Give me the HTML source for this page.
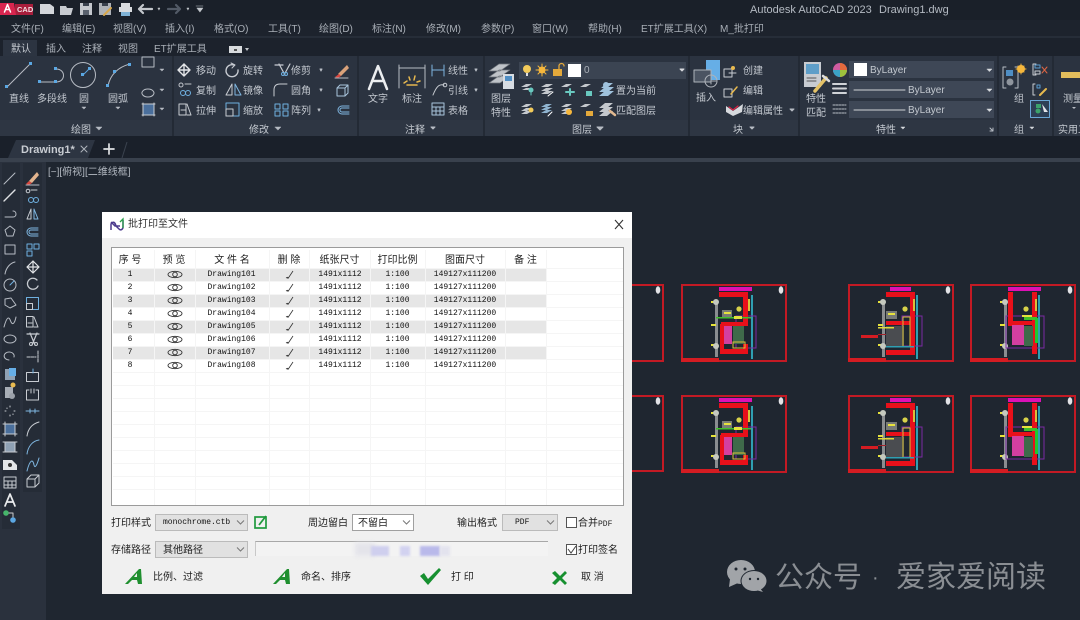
<!DOCTYPE html>
<html lang="zh"><head><meta charset="utf-8"><title>AutoCAD 批打印至文件</title>
<style>
*{box-sizing:border-box}
html,body{margin:0;padding:0;width:1080px;height:620px;overflow:hidden;background:#1f2630}
#r{position:absolute;left:0;top:0;width:1080px;height:620px;overflow:hidden;filter:blur(.35px);font-family:"Liberation Sans","Noto Sans CJK SC",sans-serif}
.b{position:absolute}
.t{position:absolute;white-space:nowrap;font-size:10px;line-height:14px;color:#c3c8cf;margin-top:2px}
.m{color:#a9afb7}
.d{color:#222;font-size:10px;line-height:14px}
.c{font-family:"Liberation Mono","Noto Serif CJK SC",monospace;font-size:8px;line-height:13px;color:#111;text-align:center;position:absolute;white-space:nowrap}
.h{position:absolute;white-space:nowrap;text-align:center;font-size:10px;line-height:14px;color:#222;top:254px}
svg{position:absolute;left:0;top:0;overflow:visible}
</style></head><body><div id="r">
<!-- chrome -->
<div class="b" style="left:0;top:0;width:1080px;height:20px;background:#1a2029"></div>
<div class="b" style="left:0;top:20px;width:1080px;height:16px;background:#1d232d"></div>
<div class="b" style="left:0;top:36px;width:1080px;height:2px;background:#262d38"></div>
<div class="b" style="left:0;top:38px;width:1080px;height:18px;background:#1c222c"></div>
<div class="b" style="left:3px;top:40px;width:34px;height:16px;background:#2c3441"></div>
<div class="b" style="left:0;top:56px;width:1080px;height:80px;background:#2b3340"></div>
<div class="b" style="left:0;top:136px;width:1080px;height:22px;background:#1a202a"></div>
<div class="b" style="left:0;top:158px;width:1080px;height:4px;background:#39414d"></div>
<div class="b" style="left:0;top:162px;width:46px;height:458px;background:#2a313d"></div>
<div class="b" style="left:2px;top:163px;width:18px;height:366px;background:#252c37"></div>
<div class="b" style="left:23px;top:163px;width:19px;height:329px;background:#252c37"></div>
<div class="b" style="left:46px;top:162px;width:1034px;height:458px;background:#1f2630"></div>
<!-- panel title strip -->
<div class="b" style="left:0;top:120px;width:1080px;height:16px;background:#2e3643"></div>
<!-- panel separators -->
<div class="b" style="left:172px;top:56px;width:2px;height:80px;background:#232a35"></div>
<div class="b" style="left:357px;top:56px;width:2px;height:80px;background:#232a35"></div>
<div class="b" style="left:483px;top:56px;width:2px;height:80px;background:#232a35"></div>
<div class="b" style="left:688px;top:56px;width:2px;height:80px;background:#232a35"></div>
<div class="b" style="left:798px;top:56px;width:2px;height:80px;background:#232a35"></div>
<div class="b" style="left:997px;top:56px;width:2px;height:80px;background:#232a35"></div>
<div class="b" style="left:1052px;top:56px;width:2px;height:80px;background:#232a35"></div>
<!-- title -->
<span class="t" style="left:750px;top:1px;font-size:11px;color:#b4bac2">Autodesk AutoCAD 2023</span>
<span class="t" style="left:879px;top:1px;font-size:11px;color:#b4bac2">Drawing1.dwg</span>
<div class="b" style="left:15px;top:4px;width:18px;height:11px;background:#a81e3c"></div>
<span class="t" style="left:17px;top:4px;margin:0;font-size:7.500px;line-height:11px;color:#f2dfe3;font-weight:bold">CAD</span>
<!-- menu -->
<span class="t m" style="left:11px;top:21px">文件(F)</span>
<span class="t m" style="left:62px;top:21px">编辑(E)</span>
<span class="t m" style="left:113px;top:21px">视图(V)</span>
<span class="t m" style="left:165px;top:21px">插入(I)</span>
<span class="t m" style="left:214px;top:21px">格式(O)</span>
<span class="t m" style="left:268px;top:21px">工具(T)</span>
<span class="t m" style="left:319px;top:21px">绘图(D)</span>
<span class="t m" style="left:372px;top:21px">标注(N)</span>
<span class="t m" style="left:426px;top:21px">修改(M)</span>
<span class="t m" style="left:481px;top:21px">参数(P)</span>
<span class="t m" style="left:532px;top:21px">窗口(W)</span>
<span class="t m" style="left:588px;top:21px">帮助(H)</span>
<span class="t m" style="left:641px;top:21px">ET扩展工具(X)</span>
<span class="t m" style="left:720px;top:21px">M_批打印</span>
<!-- tabs -->
<span class="t" style="left:11px;top:41px">默认</span>
<span class="t m" style="left:46px;top:41px">插入</span>
<span class="t m" style="left:82px;top:41px">注释</span>
<span class="t m" style="left:118px;top:41px">视图</span>
<span class="t m" style="left:154px;top:41px">ET扩展工具</span>
<!-- draw panel -->
<span class="t" style="left:9px;top:91px">直线</span>
<span class="t" style="left:37px;top:91px">多段线</span>
<span class="t" style="left:79px;top:91px">圆</span>
<span class="t" style="left:108px;top:91px">圆弧</span>
<span class="t" style="left:71px;top:122px">绘图</span>
<span class="t" style="left:196px;top:63px">移动</span>
<span class="t" style="left:196px;top:83px">复制</span>
<span class="t" style="left:196px;top:103px">拉伸</span>
<span class="t" style="left:243px;top:63px">旋转</span>
<span class="t" style="left:243px;top:83px">镜像</span>
<span class="t" style="left:243px;top:103px">缩放</span>
<span class="t" style="left:291px;top:63px">修剪</span>
<span class="t" style="left:291px;top:83px">圆角</span>
<span class="t" style="left:291px;top:103px">阵列</span>
<span class="t" style="left:249px;top:122px">修改</span>
<span class="t" style="left:368px;top:91px">文字</span>
<span class="t" style="left:402px;top:91px">标注</span>
<span class="t" style="left:448px;top:63px">线性</span>
<span class="t" style="left:448px;top:83px">引线</span>
<span class="t" style="left:448px;top:103px">表格</span>
<span class="t" style="left:405px;top:122px">注释</span>
<span class="t" style="left:491px;top:91px">图层</span>
<span class="t" style="left:491px;top:105px">特性</span>
<span class="t" style="left:616px;top:83px">置为当前</span>
<span class="t" style="left:616px;top:103px">匹配图层</span>
<span class="t" style="left:572px;top:122px">图层</span>
<div class="b" style="left:519px;top:62px;width:167px;height:17px;background:#3b4452"></div>
<span class="t" style="left:584px;top:62px;font-size:10px;color:#aab0b8">0</span>
<span class="t" style="left:696px;top:90px">插入</span>
<span class="t" style="left:743px;top:63px">创建</span>
<span class="t" style="left:743px;top:83px">编辑</span>
<span class="t" style="left:743px;top:103px">编辑属性</span>
<span class="t" style="left:733px;top:122px">块</span>
<span class="t" style="left:806px;top:91px">特性</span>
<span class="t" style="left:806px;top:105px">匹配</span>
<div class="b" style="left:849px;top:61px;width:145px;height:17px;background:#3e4756"></div>
<div class="b" style="left:849px;top:81px;width:145px;height:17px;background:#3e4756"></div>
<div class="b" style="left:849px;top:101px;width:145px;height:17px;background:#3e4756"></div>
<div class="b" style="left:854px;top:63px;width:13px;height:13px;background:#fff"></div>
<span class="t" style="left:870px;top:62px">ByLayer</span>
<span class="t" style="left:908px;top:82px">ByLayer</span>
<span class="t" style="left:908px;top:102px">ByLayer</span>
<span class="t" style="left:876px;top:122px">特性</span>
<span class="t" style="left:1014px;top:91px">组</span>
<span class="t" style="left:1014px;top:122px">组</span>
<span class="t" style="left:1063px;top:91px">测量</span>
<span class="t" style="left:1058px;top:122px">实用工具</span>
<!-- file tab -->
<svg width="1080" height="620"><path d="M8 158L16 140H95L88 158Z" fill="#2d3542"/><path d="M122 158L127 142" stroke="#3a424e"/></svg>
<span class="t" style="left:21px;top:141px;font-size:11px;font-weight:bold;color:#c8ccd2">Drawing1*</span>
<span class="t" style="left:48px;top:164px;color:#b4bac2">[−][俯视][二维线框]</span>

<!-- chrome icons -->
<svg width="1080" height="620" fill="none" stroke-linecap="round" stroke-linejoin="round">
<!-- logo -->
<path d="M0 3H14L16 15H0Z" fill="#d8264f"/><path d="M4.500 12L7.500 4.500L10.500 12M5.500 9.500H9.500" stroke="#fff" stroke-width="1.500"/>
<!-- quick access -->
<path d="M40 4H50L54 7V14H40Z" fill="#d3d6da"/>
<path d="M60 6H66L67 8H73L71 15H60Z" fill="#c7cbd0"/>
<rect x="80" y="3" width="12" height="12" fill="#c3c7cc"/><rect x="83" y="3" width="6" height="3" fill="#39414d"/><rect x="83" y="10" width="6" height="5" fill="#5a626e"/>
<rect x="99" y="3" width="12" height="12" fill="#aeb2b7"/><rect x="102" y="3" width="6" height="3" fill="#39414d"/><path d="M104 15L111 8" stroke="#d6a74a" stroke-width="2"/>
<rect x="121" y="3" width="9" height="4" fill="#d9dcdf"/><rect x="119" y="7" width="13" height="5" fill="#d9dcdf"/><rect x="121" y="12" width="9" height="4" fill="#7fb2d5"/>
<path d="M139 9H152M143 5L139 9L143 13" stroke="#c4c8cd" stroke-width="2.200"/>
<path d="M168 9H180M176 5L180 9L176 13" stroke="#525a66" stroke-width="2.200"/>
<path d="M158 8L160 8L159 10Z M187 8L189 8L188 10Z M196 6H203 M197 8L203 8L200 12Z" fill="#c4c8cd" stroke="#c4c8cd" stroke-width=".5"/>
<!-- tab icon -->
<rect x="229" y="46" width="13" height="7" fill="#d8dbde"/><rect x="234" y="49" width="3" height="2" fill="#555"/><path d="M245 48L249 48L247 51Z" fill="#c4c8cd"/>
<!-- draw panel -->
<g stroke="#b7bcc4" stroke-width="1">
<path d="M7 87L30 64"/><path d="M39 82H56C66 82 66 69 56 69"/><circle cx="83" cy="75" r="12.500"/><path d="M108 86C110 75 118 67 130 64"/></g>
<g fill="#5ba7e2"><rect x="5" y="85" width="3" height="3"/><rect x="29" y="62" width="3" height="3"/><rect x="38" y="80" width="3" height="3"/><rect x="54" y="80" width="3" height="3"/><rect x="54" y="67" width="3" height="3"/><rect x="81" y="73" width="3" height="3"/><rect x="88" y="67" width="3" height="3"/><rect x="106" y="84" width="3" height="3"/><rect x="113" y="70" width="3" height="3"/><rect x="128" y="63" width="3" height="3"/></g>
<path d="M83 75L89 69" stroke="#5ba7e2"/>
<path d="M142 65H154V75H142Z M148 97A6 4 0 1 1 147.900 97Z" stroke="#b7bcc4" transform="translate(0 -8)"/>
<rect x="143" y="104" width="11" height="11" fill="#4a6f9c" stroke="#b7bcc4"/>
<path d="M142 104H155M142 115H155M143 103V116M154 103V116" stroke="#c8ccd2"/>
<path d="M160 69H164L162 71Z M160 89H164L162 91Z M160 108H164L162 110Z M82 107H86L84 109Z M116 107H120L118 109Z M96 127H102L99 130Z M275 127H281L278 130Z" fill="#b7bcc4" stroke="#b7bcc4" stroke-width=".5"/>
<!-- modify -->
<path d="M178 70H190M184 64V76M181 67L184 64L187 67M181 73L184 76L187 73M181 67L178 70L181 73M187 67L190 70L187 73" stroke="#e2e4e7" stroke-width="1.400"/>
<circle cx="181" cy="85" r="2" stroke="#c0c4ca"/><path d="M185 84H191" stroke="#c0c4ca"/><circle cx="183" cy="93" r="2.500" stroke="#6fb0e0"/><circle cx="188" cy="93" r="2.500" stroke="#6fb0e0"/>
<path d="M179 104H186V115H179Z M187 104L191 115H187" stroke="#c8ccd2"/><path d="M181 110H186" stroke="#c8ccd2"/>
<path d="M234 65A6 6 0 1 0 238 70" stroke="#c8ccd2" stroke-width="1.400"/><path d="M231 63L235 65L232 68" stroke="#c8ccd2"/>
<path d="M232 84L226 95H232Z" stroke="#c8ccd2"/><path d="M235 84L241 95H235Z" stroke="#7fb6e0"/>
<rect x="226" y="103" width="13" height="13" stroke="#6fb0e0"/><rect x="226" y="109" width="7" height="7" stroke="#c8ccd2"/>
<path d="M275 65H283M279 64L285 75M290 64L284 75" stroke="#c8ccd2" stroke-width="1.200"/><circle cx="283" cy="74" r="1.500" stroke="#6fb0e0"/><circle cx="286" cy="74" r="1.500" stroke="#6fb0e0"/>
<path d="M274 96V90Q274 84 280 84H287" stroke="#c8ccd2"/>
<path d="M275 104h5v5h-5ZM283 104h5v5h-5ZM275 111h5v5h-5ZM283 111h5v5h-5Z" stroke="#6fb0e0"/>
<path d="M320 69L322 69L321 71Z M320 89L322 89L321 91Z M318 109L320 109L319 111Z" fill="#b7bcc4" stroke="#b7bcc4"/>
<path d="M338 74L347 65L349 68L341 76Z" fill="#d9a27a"/><path d="M335 77L339 74L341 76L338 78Z" fill="#d9473f"/><path d="M335 78H348" stroke="#b7bcc4"/>
<path d="M337 88H345V96H337Z M337 88L340 85H348V93L345 96M345 88L348 85" stroke="#a8c4dc"/>
<path d="M349 106H342A3.500 3.500 0 0 0 342 114H349M349 108H342A1.500 1.500 0 0 0 342 112H349" stroke="#7fb6e0"/>
<!-- annotate -->
<path d="M369 89L378 66L387 89M372 81H384" stroke="#eceef0" stroke-width="2.500"/>
<path d="M399 65V88M425 65V88M399 68H425" stroke="#b7bcc4"/>
<path d="M404 83L407 81M409 77L410 80M415 76L414 80M420 81L417 82M407 85H417" stroke="#e6b84f" stroke-width="1.500"/>
<path d="M432 65V76M444 65V76M432 70H444" stroke="#7fb6e0"/>
<path d="M433 95C437 85 440 84 444 85" stroke="#c8ccd2"/><circle cx="445" cy="85" r="1.800" stroke="#c8ccd2"/>
<rect x="432" y="103" width="12" height="12" stroke="#a8c4dc"/><path d="M432 107H444M432 111H444M436 107V115M440 107V115" stroke="#a8c4dc"/>
<path d="M475 69L477 69L476 71Z M475 89L477 89L476 91Z M431 127H435L433 129Z" fill="#b7bcc4" stroke="#b7bcc4"/>
<!-- layer -->
<path d="M489 71L499 64H510L500 71Z M489 77L499 70H510L500 77Z M489 83L499 76H510L500 83Z" fill="#bfc3c8" stroke="#6f747b" stroke-width=".7"/>
<rect x="503" y="74" width="11" height="15" fill="#d7dce2"/><rect x="505" y="76" width="7" height="5" fill="#4f8ec4"/>
<circle cx="527" cy="69" r="4" fill="#f3cb5a"/><rect x="526" y="73" width="2" height="3" fill="#dfe0e2"/>
<circle cx="542" cy="70" r="3.500" fill="#f6b73c"/><path d="M542 64V76M536 70H548M538 66L546 74M546 66L538 74" stroke="#f6b73c"/>
<rect x="553" y="69" width="9" height="7" fill="#e4a93b"/><path d="M559 69V66A2.500 2.500 0 0 1 564 66" stroke="#e4a93b" stroke-width="1.300"/>
<rect x="568" y="64" width="13" height="13" fill="#fff"/>
<path d="M680 69H684L682 71Z" fill="#d7dade" stroke="#d7dade"/>
<g fill="#c4c8cd">
<path d="M521 87L526 84H532L527 87Z M522 90l4-2h6l-4 2Z"/><path d="M541 87L546 84H553L548 87Z M541 91L546 88H553L548 91Z M541 94L546 91H553L548 94Z"/>
<path d="M561 87L566 84H572L567 87Z"/><path d="M580 87L585 84H591L586 87Z"/>
<path d="M601 88L607 83H613L607 88Z M599 92L605 87H614L608 92Z M599 96L605 91H614L608 96Z" fill="#9fc2dd"/>
<path d="M521 107L526 104H532L527 107Z M521 111L526 108H532L527 111Z M521 114L526 111H532L527 114Z"/>
<path d="M541 107L546 104H552L547 107Z M541 110L546 107H552L547 110Z M541 113L546 110H552L547 113Z" fill="#8fb3cf"/>
<path d="M561 107L566 104H572L567 107Z M561 111L566 108H572L567 111Z M561 114L566 111H572L567 114Z"/>
<path d="M580 107L585 104H591L586 107Z"/>
<path d="M599 108L605 103H613L607 108Z M599 112L605 107H613L607 112Z M599 116L605 111H613L607 116Z"/></g>
<circle cx="531" cy="90" r="2.500" fill="#69c9c0"/><path d="M531 92V95" stroke="#69c9c0"/><path d="M548 96L553 92" stroke="#fff"/><path d="M566 92h8M570 89v6" stroke="#69c9c0" stroke-width="2"/><rect x="586" y="91" width="6" height="5" fill="#69c9c0"/><circle cx="531" cy="110" r="2.500" fill="#f3cb5a"/><path d="M548 116L552 112" stroke="#fff"/><circle cx="569" cy="112" r="3" fill="#f6b73c"/><rect x="586" y="111" width="7" height="5" fill="#e4a93b"/><path d="M610 111L615 115" stroke="#e0b890" stroke-width="2.500"/>
<circle cx="606" cy="85" r="3" fill="#9fc2dd"/>
<path d="M597 127H603L600 130Z" fill="#b7bcc4" stroke="#b7bcc4"/>
<!-- block -->
<path d="M706 60H720V80H706Z" fill="#66aee6" stroke="none"/><rect x="694" y="70" width="17" height="12" fill="#4b5462" stroke="#aeb3ba"/><circle cx="711" cy="81" r="6" stroke="#aeb3ba"/><path d="M711 78V84M711 81L716 81" stroke="#aeb3ba"/>
<path d="M724 69H732V77H724Z M729 73H736" stroke="#c8ccd2"/><circle cx="733" cy="68" r="2" fill="#e8ba4f"/><path d="M724 89H732V97H724Z" stroke="#c8ccd2"/><path d="M731 94L737 87" stroke="#e8ba4f" stroke-width="1.500"/>
<path d="M726 106L733 111L743 104L742 112L733 116L726 112Z" fill="#d6d9dd"/><path d="M729 107L733 110L738 106" stroke="#d24" stroke-width="1.200"/>
<path d="M790 109H794L792 111Z M750 127H754L752 129Z" fill="#b7bcc4" stroke="#b7bcc4"/>
<!-- props -->
<rect x="804" y="62" width="17" height="25" fill="#c8ccd2"/><rect x="806" y="64" width="13" height="10" fill="#5e9ec9"/><path d="M807 78h9M807 81h9" stroke="#555"/><path d="M815 91L826 78" stroke="#e4c268" stroke-width="3.500"/><path d="M823 76L829 81" stroke="#ddd" stroke-width="2.500"/>
<circle cx="840" cy="70" r="7" fill="#d05ba0"/><path d="M840 63A7 7 0 0 1 847 70H840Z" fill="#e46a3c"/><path d="M840 70H847A7 7 0 0 1 840 77Z" fill="#9dc23c"/><path d="M840 70V77A7 7 0 0 1 833 70Z" fill="#3ba3c6"/>
<path d="M833 84H846M833 88.500H846M833 93H846" stroke="#d0d3d7" stroke-width="2"/><path d="M833 105H846M833 109H846M833 113H846" stroke="#b7bcc4" stroke-dasharray="2 1"/>
<path d="M854 90H905M854 110H905" stroke="#d0d3d7"/>
<path d="M987 69H992L989.500 71.500Z M987 89H992L989.500 91.500Z M987 109H992L989.500 111.500Z M901 127H905L903 129Z M1030 127H1034L1032 129Z" fill="#d7dade" stroke="#d7dade" stroke-width=".5"/>
<path d="M990 128L993 131M993 128V131H990" stroke="#b7bcc4"/>
<!-- group -->
<path d="M1006 67H1003V88H1006M1015 67H1018V88H1015" stroke="#b7bcc4"/><rect x="1006" y="70" width="7" height="6" fill="#4f8ec4"/><circle cx="1010" cy="82" r="3.500" fill="#8f959d"/>
<circle cx="1021" cy="69" r="4" fill="#f6b73c"/><path d="M1021 64V74M1016 69H1026M1018 66L1024 72M1024 66L1018 72" stroke="#f6b73c"/>
<path d="M1036 64H1033V75H1036" stroke="#c8ccd2"/><rect x="1035" y="65" width="5" height="3" stroke="#5b9ed0"/><rect x="1035" y="71" width="5" height="3" stroke="#c8ccd2"/><path d="M1042 67L1047 73M1047 67L1042 73" stroke="#d64"/>
<path d="M1035 84H1033V95H1035" stroke="#c8ccd2"/><path d="M1040 95L1046 89" stroke="#e8ba4f" stroke-width="2"/><rect x="1037" y="85" width="3" height="3" stroke="#5b9ed0"/>
<rect x="1030.500" y="100.500" width="19" height="17" fill="#2d3f55" stroke="#6aa7d6"/><rect x="1036" y="104" width="5" height="4" fill="#3ca36b"/><circle cx="1038" cy="111" r="2.500" fill="#3ca36b"/><path d="M1042 104L1048 112L1044 112L1045 116Z" fill="#e4e6e9"/>
<rect x="1061" y="72" width="19" height="6" fill="#e2bd5c"/>
<path d="M1072 107H1076L1074 109Z" fill="#b7bcc4"/>
<!-- tab -->
<path d="M81 146L87 152M87 146L81 152" stroke="#aeb3ba"/><path d="M104 149H114M109 144V154" stroke="#dfe1e4" stroke-width="1.700"/>
<!-- left toolbar 1 -->
<g stroke="#b7bcc4">
<path d="M4 184L15 173"/><path d="M4 201L15 190" stroke="#dfe1e4" stroke-width="1.400"/><path d="M5 217H13C17 217 17 211 13 211"/><path d="M10 226L15 230L13 236H7L5 230Z"/><rect x="5" y="245" width="10" height="9"/><path d="M5 274C6 268 10 263 15 262"/><circle cx="10" cy="285" r="6"/><path d="M10 285L14 281" stroke="#6fb0e0"/><path d="M5 299L11 298L16 305L10 308L5 305Z"/><path d="M4 327C7 316 9 316 11 322C13 326 15 322 16 317"/><ellipse cx="10" cy="339" rx="6" ry="4"/><path d="M14 357A5 4 0 1 0 9 360"/></g>
<rect x="5" y="369" width="10" height="11" fill="#8fa1b4"/><rect x="9" y="368" width="7" height="8" fill="#66aee6"/><rect x="5" y="387" width="8" height="11" fill="#a7adb5"/><circle cx="13" cy="385" r="2.500" fill="#e8ba4f"/><circle cx="12" cy="396" r="3" fill="#9aa0a8"/>
<path d="M10 406v1M5 411h1M14 411h1M10 415v1M7 408v.5M13 414v.5" stroke="#c8ccd2"/>
<rect x="5" y="424" width="10" height="10" fill="#4a6f9c"/><path d="M3 424H17M3 434H17M5 422V436M15 422V436" stroke="#c8ccd2"/>
<rect x="5" y="442" width="10" height="10" fill="#8fa1b4" stroke="#c8ccd2"/><path d="M3 442H17M3 452H17" stroke="#c8ccd2"/>
<path d="M3 460H12L17 465V470H3Z" fill="#e3e5e8"/><circle cx="10" cy="465" r="2" fill="#333"/>
<rect x="4" y="477" width="12" height="11" stroke="#c8ccd2"/><path d="M4 481H16M4 485H16M8 481V488M12 481V488" stroke="#c8ccd2"/>
<path d="M5 506L10 494L15 506M7 502H13" stroke="#e8eaec" stroke-width="1.700"/>
<circle cx="6" cy="513" r="2.800" fill="#46b66b"/><circle cx="13" cy="520" r="2.800" fill="#5ba7e2"/><path d="M9 513H13V517" stroke="#ccc"/>
<!-- left toolbar 2 -->
<path d="M29 181L37 172L39 175L32 183Z" fill="#e2b48e"/><path d="M26 184L29 181L32 183L29 185Z" fill="#d9473f"/><path d="M26 185H39" stroke="#b7bcc4"/>
<circle cx="28" cy="191" r="1.800" stroke="#c8ccd2"/><path d="M31 190H37" stroke="#c8ccd2"/><circle cx="31" cy="200" r="2.500" stroke="#6fb0e0"/><circle cx="36" cy="200" r="2.500" stroke="#6fb0e0"/>
<path d="M31 209L27 219H31Z" stroke="#c8ccd2"/><path d="M34 209L38 219H34Z" stroke="#7fb6e0"/>
<path d="M38 228H31A3.500 3.500 0 0 0 31 236H38M38 230H31A1.500 1.500 0 0 0 31 234H38" stroke="#7fb6e0"/>
<path d="M27 244h5v5h-5ZM34 244h5v5h-5ZM27 251h5v5h-5Z" stroke="#6fb0e0"/>
<path d="M27 267H39M33 261V273M30 264L33 261L36 264M30 270L33 273L36 270M30 264L27 267L30 270M36 264L39 267L36 270" stroke="#e2e4e7" stroke-width="1.200"/>
<path d="M37 280A5.500 5.500 0 1 0 38 286" stroke="#c8ccd2" stroke-width="1.300"/>
<rect x="26.500" y="297.500" width="12" height="12" stroke="#6fb0e0"/><rect x="26.500" y="303.500" width="6" height="6" stroke="#c8ccd2"/>
<path d="M26.500 316.500H33V327H26.500ZM34 317L38 327H34M28 323H32" stroke="#c8ccd2"/>
<path d="M27 334L39 334M30 333L35 345M37 333L32 345" stroke="#c8ccd2" stroke-width="1.200"/><circle cx="31" cy="344" r="1.500" stroke="#c8ccd2"/><circle cx="36" cy="344" r="1.500" stroke="#c8ccd2"/>
<path d="M38 351V362M27 357H36" stroke="#c8ccd2" stroke-dasharray="3 1"/>
<rect x="26.500" y="372.500" width="12" height="9" stroke="#c8ccd2"/><path d="M33 369V373" stroke="#6fb0e0"/>
<path d="M26.500 390V400H38.500V390H36M26.500 390H29M31 389V393M34 389V393" stroke="#c8ccd2"/>
<path d="M26 411H39" stroke="#7fb6e0"/><path d="M30 409V413M35 409V413" stroke="#7fb6e0"/>
<path d="M27 436C28 429 32 424 39 422" stroke="#c8ccd2"/><path d="M27 454C28 447 32 441 39 440" stroke="#7fb6e0"/><path d="M27 471C30 459 33 459 34 465C35 469 37 465 39 458" stroke="#7fb6e0"/>
<path d="M27 479H35V487H27ZM27 479L31 475H39V483L35 487M35 479L39 475" stroke="#c8ccd2"/>
</svg>

<!-- drawing sheets -->
<svg width="1080" height="620" viewBox="0 0 1080 620">
<defs>
<g id="core">
<rect x="1" y="1" width="104" height="76" fill="none" stroke="#c31a24" stroke-width="2"/>
<rect x="0" y="74" width="38" height="4" fill="#d41c22"/>
<ellipse cx="100" cy="6" rx="2.300" ry="3.800" fill="#e2e2e6"/>
<rect x="34" y="16" width="3" height="57" fill="#8a8d90"/>
<rect x="30" y="17" width="5" height="2" fill="#e6e23c"/><rect x="30" y="40" width="5" height="2" fill="#e6e23c"/><rect x="30" y="60" width="5" height="2" fill="#e6e23c"/>
<circle cx="35" cy="18" r="3" fill="#c5c9c0"/><circle cx="35" cy="62" r="3" fill="#c5c9c0"/>
</g>
<g id="A">
<use href="#core"/>
<rect x="38" y="3" width="33" height="4" fill="#dd10b5"/>
<rect x="70" y="11" width="2" height="64" fill="#2f9fb2"/>
<rect x="55" y="32" width="20" height="32" fill="none" stroke="#7b2ba3"/>
<rect x="38" y="8" width="28" height="5" fill="#e8101a"/>
<rect x="62" y="8" width="5" height="33" fill="#e8101a"/>
<rect x="40" y="38" width="27" height="4" fill="#e8101a"/>
<rect x="39" y="40" width="4" height="30" fill="#e8101a"/>
<rect x="39" y="65" width="28" height="5" fill="#e8101a"/>
<rect x="62" y="60" width="5" height="8" fill="#e8101a"/>
<rect x="35" y="33" width="35" height="1.500" fill="#3fc02a"/>
<rect x="43" y="42" width="8" height="18" fill="#d43fa0"/>
<rect x="52" y="42" width="11" height="18" fill="#3f6a4a"/>
<rect x="52" y="58" width="12" height="6" fill="none" stroke="#d8c23a"/>
<rect x="41" y="26" width="10" height="7" fill="#7a7d74"/><rect x="43" y="28" width="7" height="2" fill="#e6e23c"/>
<circle cx="58" cy="25" r="2.600" fill="#d8d24a"/>
<rect x="53" y="32" width="8" height="3" fill="#e6e23c"/>
<rect x="67" y="15" width="2" height="12" fill="#d8c23a"/>
</g>
<g id="B">
<use href="#core"/>
<rect x="42" y="3" width="21" height="4" fill="#dd10b5"/>
<rect x="68" y="11" width="2" height="64" fill="#2f9fb2"/>
<rect x="54" y="32" width="20" height="30" fill="none" stroke="#7b2ba3"/>
<rect x="38" y="8" width="27" height="5" fill="#e8101a"/>
<rect x="62" y="8" width="5" height="63" fill="#e8101a"/>
<rect x="38" y="37" width="26" height="4" fill="#e8101a"/>
<rect x="38" y="66" width="28" height="5" fill="#e8101a"/>
<rect x="13" y="51" width="17" height="3" fill="#d41c22"/>
<rect x="30" y="50" width="14" height="1" fill="#a2222a"/>
<rect x="38" y="27" width="11" height="8" fill="#777a76"/><rect x="40" y="29" width="7" height="2" fill="#e6e23c"/>
<circle cx="57" cy="25" r="2.600" fill="#d8d24a"/>
<rect x="38" y="42" width="18" height="20" fill="#4a4c50"/>
<rect x="30" y="43" width="16" height="1.500" fill="#dfdb3c"/>
<rect x="55" y="33" width="7" height="30" fill="none" stroke="#d8c23a"/>
<rect x="65" y="15" width="2" height="12" fill="#d8c23a"/>
<rect x="38" y="62" width="28" height="1.500" fill="#2f9fb2"/>
</g>
<g id="C">
<use href="#core"/>
<rect x="38" y="3" width="33" height="4" fill="#dd10b5"/>
<rect x="68" y="11" width="2" height="64" fill="#2f9fb2"/>
<rect x="36" y="32" width="38" height="32" fill="none" stroke="#7b2ba3"/>
<rect x="38" y="8" width="5" height="34" fill="#e8101a"/>
<rect x="62" y="8" width="5" height="62" fill="#e8101a"/>
<rect x="38" y="37" width="26" height="4" fill="#e8101a"/>
<rect x="42" y="41" width="12" height="20" fill="#d43fa0"/>
<rect x="54" y="33" width="13" height="3" fill="#3fc02a"/>
<rect x="54" y="42" width="9" height="20" fill="#3f6a4a"/>
<rect x="65" y="34" width="3" height="25" fill="#20c830"/>
<circle cx="56" cy="25" r="2.600" fill="#d8d24a"/>
<rect x="52" y="31" width="10" height="2" fill="#e6e23c"/>
<rect x="65" y="15" width="2" height="12" fill="#d8c23a"/>
</g>
</defs>
<path d="M632 285H663V361H632" fill="none" stroke="#c31a24" stroke-width="2"/><ellipse cx="658" cy="290" rx="2.300" ry="3.800" fill="#e2e2e6"/>
<path d="M632 396H663V471H632" fill="none" stroke="#c31a24" stroke-width="2"/><ellipse cx="658" cy="401" rx="2.300" ry="3.800" fill="#e2e2e6"/>
<use href="#A" x="681" y="284"/><use href="#A" x="681" y="395"/>
<use href="#B" x="848" y="284"/><use href="#B" x="848" y="395"/>
<use href="#C" x="970" y="284"/><use href="#C" x="970" y="395"/>
</svg>

<!-- dialog -->
<div class="b" style="left:102px;top:212px;width:530px;height:382px;background:#f0f0f0"></div>
<div class="b" style="left:102px;top:212px;width:530px;height:26px;background:#fff"></div>
<span class="t d" style="left:128px;top:216px;color:#333">批打印至文件</span>
<div class="b" style="left:111px;top:247px;width:513px;height:259px;background:#fff;border:1px solid #9b9b9b"></div>
<svg width="1080" height="620" fill="none">
<path d="M111 222L115 226L120 226M111 230V224C113 221 115 222 116 226L119 229C121 231 123 229 123 227V220" stroke="#4b3a8c" stroke-width="1.500"/><path d="M120 222L123 219V228" stroke="#2aa04a" stroke-width="1.300"/>
<path d="M615 220L623 229M623 220L615 229" stroke="#333" stroke-width="1.100"/>
<!-- stripes -->
<g fill="#e6e6e6"><rect x="113" y="268" width="433" height="13"/><rect x="113" y="294" width="433" height="13"/><rect x="113" y="320" width="433" height="13"/><rect x="113" y="346" width="433" height="13"/></g>
<!-- grid -->
<g stroke="#f5f5f5">
<path d="M154.500 250V505M195.500 250V505M269.500 250V505M309.500 250V505M370.500 250V505M425.500 250V505M505.500 250V505M546.500 250V505"/>
<path d="M113 268.500H623M113 281.500H623M113 294.500H623M113 307.500H623M113 320.500H623M113 333.500H623M113 346.500H623M113 359.500H623M113 372.500H623M113 385.500H623M113 398.500H623M113 411.500H623M113 424.500H623M113 437.500H623M113 450.500H623M113 463.500H623M113 476.500H623M113 489.500H623"/>
</g>
<defs><g id="eye"><ellipse cx="0" cy="0" rx="7" ry="3.200" stroke="#333" stroke-width=".9"/><circle cx="0" cy="0" r="2.300" stroke="#333" stroke-width=".9"/></g>
<path id="tick" d="M-4 3L-3 2.500L-2 3.500M-2 3.500L3 -4M-3 3L-2 2" stroke="#333" stroke-width=".8"/></defs>
<use href="#eye" x="175" y="274.500"/><use href="#eye" x="175" y="287.500"/><use href="#eye" x="175" y="300.500"/><use href="#eye" x="175" y="313.500"/><use href="#eye" x="175" y="326.500"/><use href="#eye" x="175" y="339.500"/><use href="#eye" x="175" y="352.500"/><use href="#eye" x="175" y="365.500"/>
<use href="#tick" x="290" y="275"/><use href="#tick" x="290" y="288"/><use href="#tick" x="290" y="301"/><use href="#tick" x="290" y="314"/><use href="#tick" x="290" y="327"/><use href="#tick" x="290" y="340"/><use href="#tick" x="290" y="353"/><use href="#tick" x="290" y="366"/>
</svg>
<span class="h" style="left:112px;width:36px">序 号</span>
<span class="h" style="left:154px;width:40px">预 览</span>
<span class="h" style="left:195px;width:74px">文 件 名</span>
<span class="h" style="left:269px;width:40px">删 除</span>
<span class="h" style="left:309px;width:61px">纸张尺寸</span>
<span class="h" style="left:370px;width:55px">打印比例</span>
<span class="h" style="left:425px;width:80px">图面尺寸</span>
<span class="h" style="left:505px;width:41px">备 注</span>

<span class="c" style="left:112px;top:268px;width:36px">1</span><span class="c" style="left:195px;top:268px;width:73px">Drawing101</span><span class="c" style="left:309px;top:268px;width:62px">1491x1112</span><span class="c" style="left:370px;top:268px;width:55px">1:100</span><span class="c" style="left:425px;top:268px;width:80px">149127x111200</span>
<span class="c" style="left:112px;top:281px;width:36px">2</span><span class="c" style="left:195px;top:281px;width:73px">Drawing102</span><span class="c" style="left:309px;top:281px;width:62px">1491x1112</span><span class="c" style="left:370px;top:281px;width:55px">1:100</span><span class="c" style="left:425px;top:281px;width:80px">149127x111200</span>
<span class="c" style="left:112px;top:294px;width:36px">3</span><span class="c" style="left:195px;top:294px;width:73px">Drawing103</span><span class="c" style="left:309px;top:294px;width:62px">1491x1112</span><span class="c" style="left:370px;top:294px;width:55px">1:100</span><span class="c" style="left:425px;top:294px;width:80px">149127x111200</span>
<span class="c" style="left:112px;top:307px;width:36px">4</span><span class="c" style="left:195px;top:307px;width:73px">Drawing104</span><span class="c" style="left:309px;top:307px;width:62px">1491x1112</span><span class="c" style="left:370px;top:307px;width:55px">1:100</span><span class="c" style="left:425px;top:307px;width:80px">149127x111200</span>
<span class="c" style="left:112px;top:320px;width:36px">5</span><span class="c" style="left:195px;top:320px;width:73px">Drawing105</span><span class="c" style="left:309px;top:320px;width:62px">1491x1112</span><span class="c" style="left:370px;top:320px;width:55px">1:100</span><span class="c" style="left:425px;top:320px;width:80px">149127x111200</span>
<span class="c" style="left:112px;top:333px;width:36px">6</span><span class="c" style="left:195px;top:333px;width:73px">Drawing106</span><span class="c" style="left:309px;top:333px;width:62px">1491x1112</span><span class="c" style="left:370px;top:333px;width:55px">1:100</span><span class="c" style="left:425px;top:333px;width:80px">149127x111200</span>
<span class="c" style="left:112px;top:346px;width:36px">7</span><span class="c" style="left:195px;top:346px;width:73px">Drawing107</span><span class="c" style="left:309px;top:346px;width:62px">1491x1112</span><span class="c" style="left:370px;top:346px;width:55px">1:100</span><span class="c" style="left:425px;top:346px;width:80px">149127x111200</span>
<span class="c" style="left:112px;top:359px;width:36px">8</span><span class="c" style="left:195px;top:359px;width:73px">Drawing108</span><span class="c" style="left:309px;top:359px;width:62px">1491x1112</span><span class="c" style="left:370px;top:359px;width:55px">1:100</span><span class="c" style="left:425px;top:359px;width:80px">149127x111200</span>

<!-- form -->
<span class="t d" style="left:111px;top:515px">打印样式</span>
<div class="b" style="left:155px;top:514px;width:93px;height:17px;background:#e1e1e1;border:1px solid #bbb"></div>
<span class="c" style="left:163px;top:516px">monochrome.ctb</span>
<span class="t d" style="left:308px;top:515px">周边留白</span>
<div class="b" style="left:352px;top:514px;width:62px;height:17px;background:#fff;border:1px solid #a0a0a0"></div>
<span class="t d" style="left:358px;top:515px">不留白</span>
<span class="t d" style="left:457px;top:515px">输出格式</span>
<div class="b" style="left:502px;top:514px;width:56px;height:17px;background:#e1e1e1;border:1px solid #bbb"></div>
<span class="c" style="left:515px;top:516px">PDF</span>
<div class="b" style="left:566px;top:517px;width:11px;height:11px;background:#fff;border:1px solid #555"></div>
<span class="t d" style="left:578px;top:515px">合并<span style="font-family:'Liberation Mono',monospace;font-size:8px">PDF</span></span>
<span class="t d" style="left:111px;top:542px">存储路径</span>
<div class="b" style="left:155px;top:541px;width:93px;height:17px;background:#e1e1e1;border:1px solid #bbb"></div>
<span class="t d" style="left:163px;top:542px">其他路径</span>
<div class="b" style="left:255px;top:541px;width:293px;height:15px;background:#f3f3f3;border-top:1px solid #a8a8a8;border-left:1px solid #c8c8c8"></div>
<div class="b" style="left:355px;top:543px;width:20px;height:13px;background:#e4e4ea;filter:blur(2px)"></div>
<div class="b" style="left:371px;top:546px;width:18px;height:10px;background:#cfcfee;filter:blur(1px)"></div>
<div class="b" style="left:400px;top:546px;width:10px;height:10px;background:#d2d2f0;filter:blur(1px)"></div>
<div class="b" style="left:420px;top:546px;width:20px;height:10px;background:#b9b9ea;filter:blur(1px)"></div>
<div class="b" style="left:440px;top:546px;width:10px;height:10px;background:#e3e3ee;filter:blur(1px)"></div>
<div class="b" style="left:566px;top:544px;width:11px;height:11px;background:#fff;border:1px solid #555"></div>
<span class="t d" style="left:578px;top:542px">打印签名</span>
<span class="t d" style="left:153px;top:569px">比例、过滤</span>
<span class="t d" style="left:301px;top:569px">命名、排序</span>
<span class="t d" style="left:451px;top:569px">打 印</span>
<span class="t d" style="left:581px;top:569px">取 消</span>
<svg width="1080" height="620" fill="none">
<path d="M237 520.500L240.500 524L244 520.500M237 547.500L240.500 551L244 547.500M403 520.500L406.500 524L410 520.500M547 520.500L550.500 524L554 520.500" stroke="#777"/>
<rect x="255" y="517" width="11" height="11" stroke="#1f9a3d" stroke-width="1.700"/>
<path d="M259 525L266 516" stroke="#1f9a3d" stroke-width="1.800"/>
<path d="M568 549L571 553L576 546" stroke="#444"/>
<g stroke="none" fill="#1f8f2f">
<path d="M125 584L139 569H141L142 584H138L137 580H132L128 584ZM134 577H137L137 573Z"/>
<path d="M273 584L287 569H289L290 584H286L285 580H280L276 584ZM282 577H285L285 573Z"/>
<path d="M420 576L424 573L428 579L439 568L441 570L428 585Z" fill="#179030"/>
<path d="M552 573L555 571L560 576L565 571L567 573L562 578L567 583L565 585L560 580L555 585L552 583L557 578Z" fill="#179030"/>
</g>
</svg>

<!-- watermark -->
<svg width="1080" height="620">
<ellipse cx="741" cy="572" rx="14" ry="12" fill="#a1a4a8"/><path d="M730 579L729 587L738 583Z" fill="#a1a4a8"/>
<ellipse cx="754" cy="581" rx="13.500" ry="11" fill="#1f2630"/>
<ellipse cx="754" cy="581" rx="12.500" ry="10" fill="#a1a4a8"/><path d="M759 587L763 592L756 590Z" fill="#a1a4a8"/>
<circle cx="736" cy="569" r="1.500" fill="#1f2630"/><circle cx="745" cy="569" r="1.500" fill="#1f2630"/><circle cx="750" cy="579" r="1.200" fill="#1f2630"/><circle cx="758" cy="579" r="1.200" fill="#1f2630"/>
</svg>
<span class="t" style="left:775px;top:556px;font-size:29px;line-height:40px;color:#8a8e93">公众号</span>
<span class="t" style="left:872px;top:556px;font-size:20px;line-height:40px;color:#8a8e93">·</span>
<span class="t" style="left:896px;top:556px;font-size:30px;line-height:40px;color:#8a8e93">爱家爱阅读</span>
</div></body></html>
